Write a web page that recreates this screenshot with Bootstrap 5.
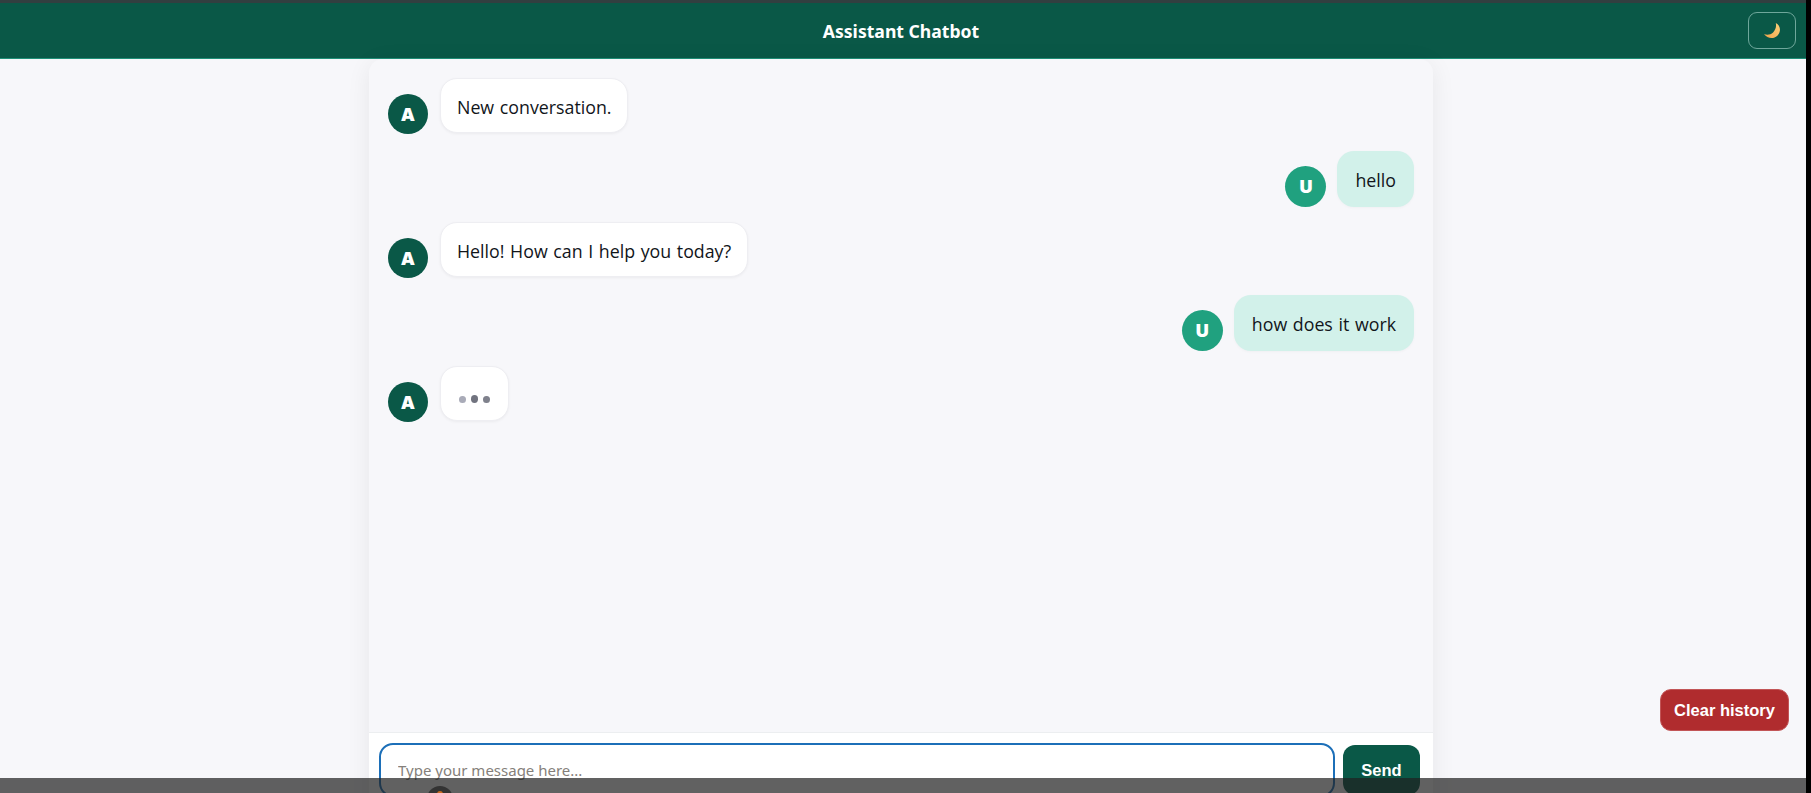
<!DOCTYPE html>
<html lang="en">
<head>
<meta charset="utf-8">
<title>Assistant Chatbot</title>
<link href="https://cdn.jsdelivr.net/npm/bootstrap@5.3.0/dist/css/bootstrap.min.css" rel="stylesheet">
<style>
html, body { height: 100%; overflow: hidden; }
body { background: #000; font-family: "Open Sans", "Noto Sans", sans-serif; color: #11151a; }
.app-frame { width: 1806px; height: 793px; background: #f7f7fa; border-top: 3px solid #323f40; position: relative; overflow: hidden; }
.top-bar { height: 56px; background: #0a5847; border-bottom: 1px solid #1f8f78; }
.top-title { font-size: 17.6px; font-weight: 700; color: #fff; font-family: "Noto Sans", sans-serif; width: 1802px; text-align: center; margin-top: 1px; }
.theme-toggle { position: absolute; top: 9px; right: 10px; width: 48px; height: 37px; border: 1px solid #6fa79b; border-radius: 9px; background: transparent; padding: 0; }
.chat-panel { width: 1064px; height: 800px; margin-left: 369px; background: #f7f7fa; border-radius: 14px 14px 0 0; box-shadow: 0 4px 24px rgba(0,0,0,.07); }
.chat-scroll { height: 673px; padding: 20px 19px 0; }
.msg-row { height: 72px; }
.msg-row.last-row { height: 60px; }
.avatar-dot { border-radius: 50%; color: #fff; font-weight: 900; font-size: 18px; font-family: "Inter", sans-serif; flex: none; }
.avatar-bot { width: 40px; height: 40px; margin-top: 15px; margin-right: 4px; background: #0a5847; }
.avatar-user { width: 41px; height: 41px; margin-top: 15px; margin-right: 3px; background: #20a17f; }
.bubble-bot, .bubble-user { border-radius: 17px; font-size: 17.8px; word-spacing: 1px; display: flex; align-items: center; }
.bubble-bot { height: 55px; margin-top: -1px; background: #fff; padding: 3px 16px 0; border: 1px solid #eeeef2; box-shadow: 0 1px 3px rgba(0,0,0,.05); }
.bubble-user { height: 56px; background: #d2f1ea; padding: 3px 18px 0; box-shadow: 0 1px 3px rgba(0,0,0,.03); }
.bubble-typing { width: 69px; padding: 11px 18px 0; gap: 5px; }
.dot-t { width: 7px; height: 7px; border-radius: 50%; background: #a9abb8; }
.dot-t.dot-mid { width: 8px; height: 8px; background: #71737f; }
.dot-t.dot-end { background: #7f818c; }
.composer { background: #fff; border-top: 1px solid #eceef0; height: 100px; padding: 10px 13px 0 10px; }
.msg-input.form-control { height: 54px; width: 956px; border: 2px solid #1c6fb8; border-radius: 14px; font-size: 15px; padding: 8px 17px; font-family: "Noto Sans", sans-serif; box-shadow: none; }
.msg-input::placeholder { color: #857f7a; opacity: 1; }
.send-btn.btn { width: 77px; height: 50px; margin-top: 2px; padding: 0; background: #0a5847; color: #fff; border: 0; border-radius: 12px; font-weight: 700; font-size: 16.5px; font-family: "Liberation Sans", sans-serif; }
.clear-btn.btn { position: absolute; top: 686px; right: 17px; width: 129px; height: 42px; padding: 0; background: #b02c2e; border: 1px solid #c25557; border-radius: 11px; color: #fff; font-weight: 700; font-size: 16.5px; font-family: "Liberation Sans", sans-serif; }
.bottom-shade { position: absolute; left: 0; right: 0; top: 775px; height: 15px; background: rgba(32,32,32,.71); overflow: hidden; }
.peek-dot { position: absolute; left: 427px; top: 8px; width: 26px; height: 26px; border-radius: 50%; background: #333; }
.peek-dot::after { content: ""; position: absolute; left: 10px; top: 5px; width: 6px; height: 6px; border-radius: 50%; background: #c96a20; }
</style>
</head>
<body>
<div class="app-frame">
  <header class="top-bar d-flex align-items-center">
    <div class="top-title">Assistant Chatbot</div>
    <button class="theme-toggle d-flex align-items-center justify-content-center" aria-label="Toggle theme">
      <svg width="16" height="15" viewBox="0 0 16 15"><defs><linearGradient id="moonfill" x1="0" y1="1" x2="1" y2="0"><stop offset="0" stop-color="#f2a24a"/><stop offset="1" stop-color="#fbd27a"/></linearGradient></defs><path d="M11.8 0C14.8 1.6 16.2 4.4 15.9 7.4 15.4 11.8 11.8 15 7.6 15 4.6 15 2 13.6 0 11 3 12.2 6.6 11.8 9.1 9.4 11.6 6.9 12.6 3.4 11.8 0Z" fill="url(#moonfill)"/></svg>
    </button>
  </header>
  <main class="chat-panel">
    <div class="chat-scroll">
      <div class="msg-row d-flex gap-2">
        <div class="avatar-dot avatar-bot d-flex align-items-center justify-content-center">A</div>
        <div class="bubble-bot">New conversation.</div>
      </div>
      <div class="msg-row d-flex gap-2 justify-content-end">
        <div class="avatar-dot avatar-user d-flex align-items-center justify-content-center">U</div>
        <div class="bubble-user">hello</div>
      </div>
      <div class="msg-row d-flex gap-2">
        <div class="avatar-dot avatar-bot d-flex align-items-center justify-content-center">A</div>
        <div class="bubble-bot">Hello! How can I help you today?</div>
      </div>
      <div class="msg-row d-flex gap-2 justify-content-end">
        <div class="avatar-dot avatar-user d-flex align-items-center justify-content-center">U</div>
        <div class="bubble-user">how does it work</div>
      </div>
      <div class="msg-row last-row d-flex gap-2">
        <div class="avatar-dot avatar-bot d-flex align-items-center justify-content-center">A</div>
        <div class="bubble-bot bubble-typing">
          <span class="dot-t"></span>
          <span class="dot-t dot-mid"></span>
          <span class="dot-t dot-end"></span>
        </div>
      </div>
    </div>
    <div class="composer d-flex gap-2">
      <input class="form-control msg-input" type="text" placeholder="Type your message here...">
      <button class="btn send-btn">Send</button>
    </div>
  </main>
  <button class="btn clear-btn">Clear history</button>
  <div class="bottom-shade"><span class="peek-dot"></span></div>
</div>
<script src="https://cdn.jsdelivr.net/npm/bootstrap@5.3.0/dist/js/bootstrap.bundle.min.js"></script>
</body>
</html>
